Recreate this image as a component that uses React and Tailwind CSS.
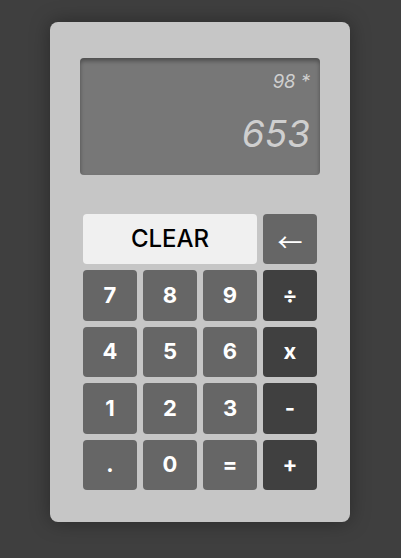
const keys = [
  { label: '7', kind: 'num' },
  { label: '8', kind: 'num' },
  { label: '9', kind: 'num' },
  { label: '÷', kind: 'op' },
  { label: '4', kind: 'num' },
  { label: '5', kind: 'num' },
  { label: '6', kind: 'num' },
  { label: 'x', kind: 'op' },
  { label: '1', kind: 'num' },
  { label: '2', kind: 'num' },
  { label: '3', kind: 'num' },
  { label: '-', kind: 'op' },
  { label: '.', kind: 'num' },
  { label: '0', kind: 'num' },
  { label: '=', kind: 'num' },
  { label: '+', kind: 'op' },
];

const App = () => {
  return (
    <div className="min-h-[558px] bg-[#3f3f3f] pt-[22px] font-['Inter',sans-serif]">
      <div className="ml-[50px] w-[300px] h-[500px] rounded-lg bg-[#c6c6c6] shadow-[0_0_20px_rgba(0,0,0,0.35)] pt-9 px-[30px]">
        <div className="h-[117px] rounded bg-[#777777] shadow-[inset_0_3px_4px_rgba(0,0,0,0.35)] flex flex-col items-end pr-[10px] pt-[11px] italic text-[#cfcfcf]">
          <div className="text-[18.5px] leading-[24px]">98 *</div>
          <div className="mt-[19px] text-[37px] leading-[44px]">653</div>
        </div>

        <div className="mt-[39px] px-[3px] grid grid-cols-4 gap-[6px]">
          <button className="col-span-3 h-[50px] rounded bg-[#f0f0f0] text-black text-[24px] font-medium">
            CLEAR
          </button>
          <button className="h-[50px] rounded bg-[#666666] text-white text-[25px] leading-none font-['Noto_Sans_CJK_SC',sans-serif] pt-[4px]">
            ←
          </button>
          {keys.map((k) => (
            <button
              key={k.label}
              className={`h-[50.5px] rounded text-white text-[22px] font-bold ${
                k.kind === 'op' ? 'bg-[#404040]' : 'bg-[#666666]'
              }`}
            >
              {k.label}
            </button>
          ))}
        </div>
      </div>
    </div>
  );
};

export default App;
